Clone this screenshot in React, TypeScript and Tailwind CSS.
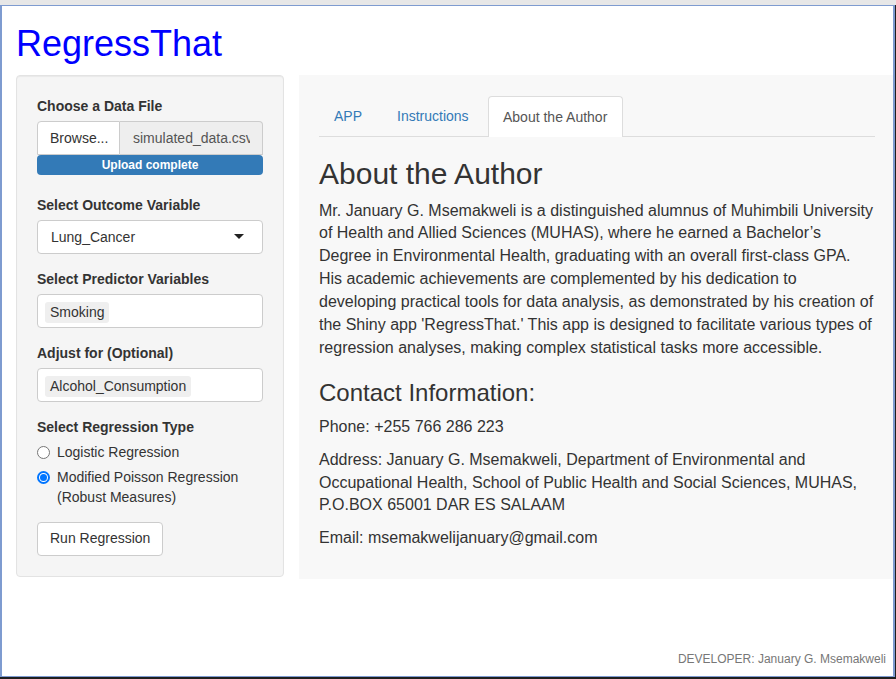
import React from 'react'

function Label({ children }: { children: React.ReactNode }) {
  return <div className="text-[14px] leading-[20px] font-bold text-[#333] mb-[5px]">{children}</div>
}

function Chip({ children }: { children: React.ReactNode }) {
  return (
    <div className="h-[34px] bg-white border border-[#ccc] rounded-[4px] pl-[7px] pt-[5px]">
      <span className="inline-block bg-[#efefef] rounded-[3px] px-[5px] text-[14px] leading-[21px] text-[#333]">
        {children}
      </span>
    </div>
  )
}

function Radio({ checked, children }: { checked?: boolean; children: React.ReactNode }) {
  return (
    <div className="flex items-start">
      {checked ? (
        <span className="mt-[4px] shrink-0 w-[13px] h-[13px] rounded-full flex items-center justify-center bg-white border-2 border-[#0075ff]">
          <span className="w-[7px] h-[7px] rounded-full bg-[#0075ff]" />
        </span>
      ) : (
        <span className="mt-[4px] shrink-0 w-[13px] h-[13px] rounded-full bg-white border border-[#767676]" />
      )}
      <span className="ml-[7px] text-[14px] leading-[20px] text-[#333]">{children}</span>
    </div>
  )
}

export default function App() {
  return (
    <div className="w-[896px] h-[679px] flex flex-col bg-[#1f1f1f] overflow-hidden font-['Liberation_Sans',Arial,sans-serif]">
      <div className="h-[5px] shrink-0 bg-[#e7e7e7]" />
      <div className="w-[895px] h-[672px] border-t border-l-2 border-r-2 border-b border-[#7e9bd0] bg-white flex flex-col overflow-hidden pl-[14px]">
        {/* Title */}
        <h1 className="mt-[18px] mb-[11px] text-[36px] leading-[1.1] text-[#0000ff] font-normal">RegressThat</h1>

        <div className="flex items-start gap-[15px]">
          {/* Sidebar */}
          <div className="w-[268px] shrink-0 bg-[#f5f5f5] border border-[#e3e3e3] rounded-[4px] p-[20px] shadow-[inset_0_1px_1px_rgba(0,0,0,0.05)]">
            <Label>Choose a Data File</Label>
            <div className="flex h-[34px]">
              <div className="w-[83px] shrink-0 bg-white border border-[#ccc] rounded-tl-[4px] px-[12px] text-[14px] leading-[32px] text-[#333]">
                Browse...
              </div>
              <div className="flex-1 bg-[#eee] border border-l-0 border-[#ccc] rounded-tr-[4px] pl-[13px] pr-[12px] overflow-hidden whitespace-nowrap text-[14px] leading-[32px] text-[#555]">
                <div className="overflow-hidden">simulated_data.csv</div>
              </div>
            </div>
            <div className="h-[20px] bg-[#337ab7] rounded-[4px] text-center text-white font-bold text-[12px] leading-[20px] mb-[20px]">
              Upload complete
            </div>

            <Label>Select Outcome Variable</Label>
            <div className="h-[34px] bg-white border border-[#ccc] rounded-[4px] flex items-center justify-between pl-[13px] pr-[18px] mb-[15px]">
              <span className="text-[14px] leading-[20px] pt-[1px] text-[#333]">Lung_Cancer</span>
              <span className="w-0 h-0 border-l-[5px] border-r-[5px] border-t-[5px] border-l-transparent border-r-transparent border-t-[#222]" />
            </div>

            <Label>Select Predictor Variables</Label>
            <div className="mb-[15px]">
              <Chip>Smoking</Chip>
            </div>

            <Label>Adjust for (Optional)</Label>
            <div className="mb-[15px]">
              <Chip>Alcohol_Consumption</Chip>
            </div>

            <Label>Select Regression Type</Label>
            <div className="flex flex-col gap-[5px] mb-[15px]">
              <Radio>Logistic Regression</Radio>
              <Radio checked>
                Modified Poisson Regression
                <br />
                (Robust Measures)
              </Radio>
            </div>

            <button className="h-[34px] px-[12px] bg-white border border-[#ccc] rounded-[4px] text-[14px] text-[#333]">
              Run Regression
            </button>
          </div>

          {/* Main panel */}
          <div className="w-[596px] shrink-0 bg-[#f8f8f8] px-[20px] pt-[21px] pb-[19px] text-[#333]">
            <div className="flex border-b border-[#ddd] h-[41px]">
              <div className="w-[61px] mr-[2px] pl-[15px] text-[14px] leading-[40px] text-[#337ab7]">APP</div>
              <div className="w-[104px] mr-[2px] pl-[15px] text-[14px] leading-[40px] text-[#337ab7]">Instructions</div>
              <div className="w-[135px] h-[41px] pl-[14px] bg-white border border-[#ddd] border-b-0 rounded-t-[4px] text-[14px] leading-[40px] text-[#555]">
                About the Author
              </div>
            </div>

            <h2 className="mt-[20px] mb-[10px] text-[30px] leading-[1.1] font-normal">About the Author</h2>
            <p className="text-[16px] leading-[1.42857] whitespace-nowrap mb-[10px]">
              Mr. January G. Msemakweli is a distinguished alumnus of Muhimbili University
              <br />
              of Health and Allied Sciences (MUHAS), where he earned a Bachelor’s
              <br />
              Degree in Environmental Health, graduating with an overall first-class GPA.
              <br />
              His academic achievements are complemented by his dedication to
              <br />
              developing practical tools for data analysis, as demonstrated by his creation of
              <br />
              the Shiny app 'RegressThat.' This app is designed to facilitate various types of
              <br />
              regression analyses, making complex statistical tasks more accessible.
            </p>

            <h3 className="mt-[20px] mb-[10px] text-[24px] leading-[1.1] font-normal">Contact Information:</h3>
            <p className="text-[16px] leading-[1.42857] mb-[10px]">Phone: +255 766 286 223</p>
            <p className="text-[16px] leading-[1.42857] whitespace-nowrap mb-[10px]">
              Address: January G. Msemakweli, Department of Environmental and
              <br />
              Occupational Health, School of Public Health and Social Sciences, MUHAS,
              <br />
              P.O.BOX 65001 DAR ES SALAAM
            </p>
            <p className="text-[16px] leading-[1.42857] mb-[10px]">Email: msemakwelijanuary@gmail.com</p>
          </div>
        </div>

        {/* Footer */}
        <div className="flex-1 flex items-end justify-end pr-[7px] pb-[10px]">
          <span className="text-[12px] leading-[14px] text-[#777]">DEVELOPER: January G. Msemakweli</span>
        </div>
      </div>
    </div>
  )
}
